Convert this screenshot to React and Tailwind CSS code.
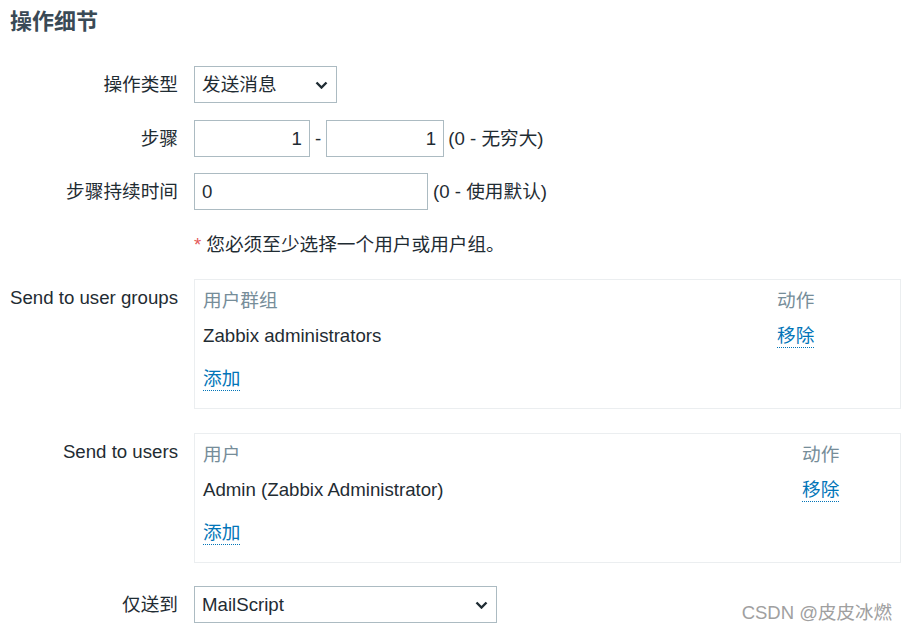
const font = { fontFamily: '"Liberation Sans", "Noto Sans CJK SC", sans-serif' };

function Chevron() {
  return (
    <svg width="13" height="8" viewBox="0 0 13 8" className="shrink-0">
      <polyline points="1.5,1.5 6.5,6.5 11.5,1.5" fill="none" stroke="#1f2c33" strokeWidth="2.4" />
    </svg>
  );
}

function Select({ value, width }) {
  return (
    <div className={`flex h-[37px] items-center justify-between border border-[#acbbc2] bg-white pl-[7px] pr-[8px] ${width}`}>
      <span>{value}</span>
      <Chevron />
    </div>
  );
}

function Field({ value, width, right }) {
  return (
    <div className={`flex h-[37px] items-center border border-[#acbbc2] bg-white px-[7px] ${right ? "justify-end" : ""} ${width}`}>
      {value}
    </div>
  );
}

function Row({ label, children, className = "", top = false }) {
  return (
    <div className={`flex ${top ? "items-start" : "items-center"} ${className}`}>
      <div className={`w-[168px] shrink-0 text-right ${top ? "pt-[6px] leading-[25px]" : ""}`}>{label}</div>
      <div className="ml-[16px] flex flex-1 items-center">{children}</div>
    </div>
  );
}

function Link({ children }) {
  return (
    <span className="inline-block border-b border-dotted border-[#0275b8] leading-[22px] text-[#0275b8]">{children}</span>
  );
}

function ListBox({ head, item, col }) {
  return (
    <div className="h-[130px] w-[707px] border border-[#ebeef0] px-[8px] pt-[8px]">
      <div className={`grid ${col} h-[25px] items-center leading-[25px] text-[#768d99]`}>
        <span>{head}</span>
        <span>动作</span>
      </div>
      <div className={`mt-[10px] grid ${col} h-[25px] items-center leading-[25px]`}>
        <span>{item}</span>
        <span><Link>移除</Link></span>
      </div>
      <div className="mt-[18px] h-[25px] leading-[25px]">
        <Link>添加</Link>
      </div>
    </div>
  );
}

export default function App() {
  return (
    <div className="relative h-[631px] w-[907px] overflow-hidden bg-white pl-[10px] text-[18.67px] text-[#1f2c33]" style={font}>
      <h4 className="pt-[8px] text-[22px] font-bold leading-[28px] text-[#3a4a56]">操作细节</h4>

      <Row label="操作类型" className="mt-[30px]">
        <Select value="发送消息" width="w-[143px]" />
      </Row>

      <Row label="步骤" className="mt-[17px]">
        <Field value="1" width="w-[116px]" right />
        <span className="mx-[5px]">-</span>
        <Field value="1" width="w-[118px]" right />
        <span className="ml-[4px]">(0 - 无穷大)</span>
      </Row>

      <Row label="步骤持续时间" className="mt-[16px]">
        <Field value="0" width="w-[234px]" />
        <span className="ml-[5px]">(0 - 使用默认)</span>
      </Row>

      <Row label="" className="mt-[16px] h-[37px]">
        <span className="mr-[5px] text-[#e45959]">*</span>
        <span>您必须至少选择一个用户或用户组。</span>
      </Row>

      <Row label="Send to user groups" className="mt-[16px]" top>
        <ListBox head="用户群组" item="Zabbix administrators" col="grid-cols-[574px_1fr]" />
      </Row>

      <Row label="Send to users" className="mt-[24px]" top>
        <ListBox head="用户" item="Admin (Zabbix Administrator)" col="grid-cols-[599px_1fr]" />
      </Row>

      <Row label="仅送到" className="mt-[23px]">
        <Select value="MailScript" width="w-[303px]" />
      </Row>

      <div className="absolute right-[15px] bottom-[4px] text-[18.5px] text-[#a0a0a0]">CSDN @皮皮冰燃</div>
    </div>
  );
}
